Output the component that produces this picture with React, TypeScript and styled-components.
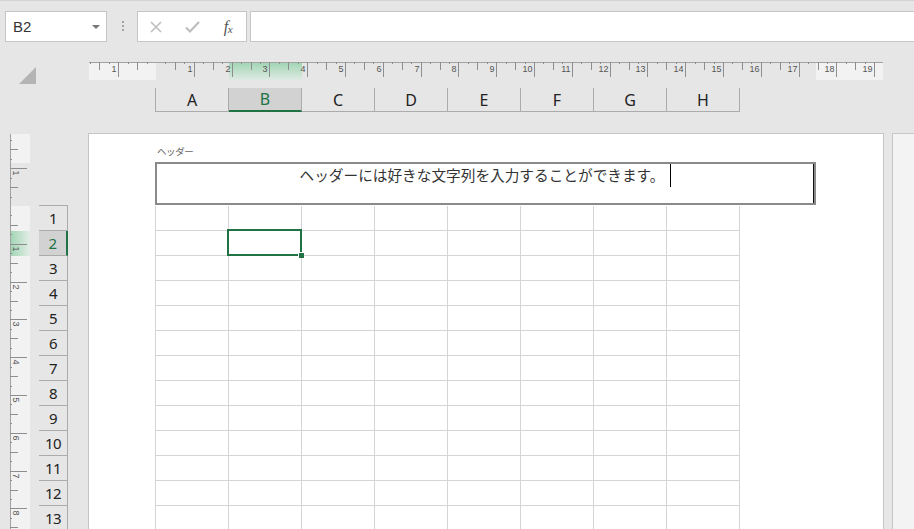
import React from "react";
import styled, { createGlobalStyle } from "styled-components";

const GREEN = "#217346";
const CM = 37.8;
const COLUMNS = ["A", "B", "C", "D", "E", "F", "G", "H"];
const ROWS = Array.from({ length: 14 }, (_, i) => i + 1);

const GlobalStyle = createGlobalStyle`
  html, body { margin: 0; padding: 0; background: #e6e6e6; }
  body { font-family: "Noto Sans", "Noto Sans CJK JP", sans-serif; }
`;

const Window = styled.div`
  width: 914px;
  height: 529px;
  overflow: hidden;
  display: flex;
  flex-direction: column;
  background: #e6e6e6;
  border-top: 1px solid #d4d4d4;
  box-sizing: border-box;
`;

/* ---------- formula bar ---------- */

const FormulaBar = styled.div`
  height: 51px;
  flex-shrink: 0;
  display: flex;
  align-items: flex-start;
  padding-top: 10px;
  box-sizing: border-box;
`;

const NameBox = styled.div`
  width: 102px;
  height: 31px;
  margin-left: 5px;
  box-sizing: border-box;
  border: 1px solid #c6c6c6;
  background: #fff;
  display: flex;
  align-items: center;
  justify-content: space-between;
  padding: 0 6px 0 7px;
  font-family: "Liberation Sans", Arial, sans-serif;
  font-size: 15px;
  color: #333;
`;

const Dots = styled.div`
  margin: 10px 0 0 15px;
  display: flex;
  flex-direction: column;
  gap: 2px;

  span {
    width: 2px;
    height: 2px;
    background: #a3a3a3;
  }
`;

const ButtonGroup = styled.div`
  width: 110px;
  height: 31px;
  margin-left: 13px;
  box-sizing: border-box;
  border: 1px solid #c6c6c6;
  background: #fff;
  display: flex;
  align-items: center;
`;

const IconSlot = styled.div`
  width: 37px;
  height: 100%;
  display: flex;
  align-items: center;
  justify-content: center;
`;

const Fx = styled.span`
  font-family: "Liberation Serif", "Times New Roman", serif;
  font-style: italic;
  font-size: 16px;
  color: #555;
  letter-spacing: -0.5px;

  sub {
    font-size: 11px;
    vertical-align: baseline;
    position: relative;
    top: 1px;
  }
`;

const FormulaInput = styled.div`
  flex: 1;
  height: 31px;
  margin-left: 3px;
  box-sizing: border-box;
  border: 1px solid #c6c6c6;
  border-right: none;
  background: #fff;
`;

/* ---------- sheet top: corner, ruler, column headers ---------- */

const SheetTop = styled.div`
  height: 81px;
  flex-shrink: 0;
  display: flex;
`;

const Corner = styled.div`
  width: 89px;
  flex-shrink: 0;
  padding: 15px 0 0 19px;
  box-sizing: border-box;
`;

const RulerColumn = styled.div`
  width: 794px;
  display: flex;
  flex-direction: column;
  padding-top: 10px;
`;

const ColumnHeaderRow = styled.div`
  margin: 8px 0 0 66px;
  display: flex;
  border-left: 1px solid #ababab;
  align-self: flex-start;
`;

const ColHeader = styled.div<{ $selected?: boolean }>`
  width: 73px;
  height: 24px;
  box-sizing: border-box;
  border-right: 1px solid #ababab;
  border-bottom: ${(p) => (p.$selected ? `2px solid ${GREEN}` : "1px solid #ababab")};
  background: ${(p) => (p.$selected ? "#d2d2d2" : "transparent")};
  color: ${(p) => (p.$selected ? GREEN : "#222")};
  display: flex;
  align-items: center;
  justify-content: center;
  font-size: 16px;
  line-height: 1;
`;

/* ---------- sheet body ---------- */

const SheetBody = styled.div`
  flex: 1;
  min-height: 0;
  display: flex;
`;

const Gutter = styled.div`
  width: 88px;
  flex-shrink: 0;
  display: flex;
  gap: 9px;
  padding-left: 10px;
  box-sizing: border-box;
`;

const VRulerBox = styled.div`
  width: 20px;
  margin-top: 1px;
  flex-shrink: 0;
`;

const RowHeaderList = styled.div`
  width: 29px;
  margin-top: 72px;
  border-top: 1px solid #ababab;
  display: flex;
  flex-direction: column;
  align-self: flex-start;
`;

const RowHeader = styled.div<{ $selected?: boolean }>`
  height: 25px;
  flex-shrink: 0;
  box-sizing: border-box;
  border-right: ${(p) => (p.$selected ? `2px solid ${GREEN}` : "1px solid #ababab")};
  border-bottom: 1px solid #ababab;
  background: ${(p) => (p.$selected ? "#d2d2d2" : "transparent")};
  color: ${(p) => (p.$selected ? GREEN : "#222")};
  display: flex;
  align-items: center;
  justify-content: center;
  font-size: 15px;
  letter-spacing: -0.5px;
  line-height: 1;
`;

const Page = styled.div`
  width: 796px;
  flex-shrink: 0;
  box-sizing: border-box;
  border: 1px solid #c6c6c6;
  border-bottom: none;
  background: #fff;
  padding: 10px 0 0 66px;
`;

const HeaderLabel = styled.div`
  font-family: "Noto Sans CJK JP", sans-serif;
  font-size: 9.5px;
  letter-spacing: -0.4px;
  line-height: 14px;
  color: #666;
  padding-left: 2px;
  margin-bottom: 4px;
`;

const HeaderBox = styled.div`
  width: 661px;
  height: 43px;
  box-sizing: border-box;
  border: 2px solid #8a8a8a;
  box-shadow: inset -1px 0 0 #111;
  display: flex;
  justify-content: center;
  align-items: flex-start;
`;

const HeaderText = styled.span`
  font-family: "Noto Sans CJK JP", sans-serif;
  font-size: 14.67px;
  line-height: 22px;
  color: #333;
`;

const Caret = styled.span`
  width: 1px;
  height: 23px;
  margin-left: 6px;
  background: #000;
`;

const CellGrid = styled.div`
  margin-top: 1px;
  display: grid;
  grid-template-columns: repeat(8, 73px);
  border-left: 1px solid #d4d4d4;
  width: fit-content;
`;

const Cell = styled.div<{ $active?: boolean }>`
  height: 25px;
  box-sizing: border-box;
  border-right: 1px solid #d4d4d4;
  border-bottom: 1px solid #d4d4d4;
  position: relative;

  ${(p) =>
    p.$active &&
    `
    &::before {
      content: "";
      position: absolute;
      top: -2px;
      left: -2px;
      right: -1px;
      bottom: -1px;
      border: 2px solid ${GREEN};
      z-index: 1;
    }
    &::after {
      content: "";
      position: absolute;
      right: -3px;
      bottom: -3px;
      width: 5px;
      height: 5px;
      background: ${GREEN};
      box-shadow: -1px -1px 0 #fff;
      z-index: 2;
    }
  `}
`;

const NextPage = styled.div`
  flex: 1;
  margin-left: 8px;
  background: #f3f3f3;
  border-top: 1px solid #c6c6c6;
  border-left: 1px solid #c6c6c6;
`;

/* ---------- rulers (drawings) ---------- */

function tickLength(q: number, tall: number) {
  if (q % 4 === 0) return tall;
  if (q % 2 === 0) return 8;
  return 2;
}

function HorizontalRuler() {
  const W = 794;
  const H = 18;
  const origin = 67;
  const ticks: React.ReactNode[] = [];
  for (let q = -7; origin + (q * CM) / 4 < W; q++) {
    if (q === 0) continue;
    const x = Math.round(origin + (q * CM) / 4) + 0.5;
    ticks.push(<line key={`t${q}`} x1={x} y1={0} x2={x} y2={tickLength(q, 15)} stroke="#8e8e8e" />);
    if (q % 4 === 0) {
      ticks.push(
        <text key={`l${q}`} x={x - 2} y={10} textAnchor="end" fontSize={9} fill="#555" fontFamily="Liberation Sans, Arial, sans-serif">
          {Math.abs(q / 4)}
        </text>
      );
    }
  }
  return (
    <svg width={W} height={H} style={{ display: "block" }}>
      <rect x={0} y={0} width={67} height={H} fill="#f2f2f2" />
      <rect x={727} y={0} width={67} height={H} fill="#f2f2f2" />
      <defs>
        <linearGradient id="hsel" x1="0" y1="0" x2="0" y2="1">
          <stop offset="0" stopColor="#9fd5b3" />
          <stop offset="1" stopColor="#dfeae3" />
        </linearGradient>
        <linearGradient id="vsel" x1="0" y1="0" x2="1" y2="0">
          <stop offset="0" stopColor="#9fd5b3" />
          <stop offset="1" stopColor="#e3ece6" />
        </linearGradient>
      </defs>
      <rect x={140} y={0} width={73} height={H} fill="url(#hsel)" />
      <line x1={0} y1={0.5} x2={W} y2={0.5} stroke="#a2a2a2" />
      {ticks}
    </svg>
  );
}

function VerticalRuler() {
  const W = 20;
  const H = 396;
  const origin = 72;
  const ticks: React.ReactNode[] = [];
  for (let q = -7; origin + (q * CM) / 4 < H; q++) {
    if (q === 0) continue;
    const y = Math.round(origin + (q * CM) / 4) + 0.5;
    ticks.push(<line key={`t${q}`} x1={0} y1={y} x2={tickLength(q, 17)} y2={y} stroke="#8e8e8e" />);
    if (q % 4 === 0) {
      ticks.push(
        <text
          key={`l${q}`}
          transform={`translate(2.5, ${y + 2}) rotate(90)`}
          fontSize={9}
          fill="#555"
          fontFamily="Liberation Sans, Arial, sans-serif"
        >
          {Math.abs(q / 4)}
        </text>
      );
    }
  }
  return (
    <svg width={W} height={H} style={{ display: "block" }}>
      <rect x={0} y={0} width={W} height={29} fill="#f2f2f2" />
      <rect x={0} y={72} width={W} height={H - 72} fill="#f2f2f2" />
      <rect x={0} y={97} width={W} height={25} fill="url(#vsel)" />
      <line x1={0.5} y1={0} x2={0.5} y2={H} stroke="#a2a2a2" />
      {ticks}
    </svg>
  );
}

/* ---------- app ---------- */

export default function App() {
  return (
    <>
      <GlobalStyle />
      <Window>
        <FormulaBar>
          <NameBox>
            <span>B2</span>
            <svg width="8" height="4" viewBox="0 0 8 4">
              <polygon points="0,0 8,0 4,4" fill="#777" />
            </svg>
          </NameBox>
          <Dots>
            <span />
            <span />
            <span />
          </Dots>
          <ButtonGroup>
            <IconSlot>
              <svg width="12" height="12" viewBox="0 0 12 12">
                <path d="M1 1 L11 11 M11 1 L1 11" stroke="#bcbcbc" strokeWidth="1.5" fill="none" />
              </svg>
            </IconSlot>
            <IconSlot>
              <svg width="15" height="12" viewBox="0 0 15 12">
                <polyline points="1,6.5 5,10.5 14,1" stroke="#bcbcbc" strokeWidth="2" fill="none" />
              </svg>
            </IconSlot>
            <IconSlot>
              <Fx>
                f<sub>x</sub>
              </Fx>
            </IconSlot>
          </ButtonGroup>
          <FormulaInput />
        </FormulaBar>

        <SheetTop>
          <Corner>
            <svg width="17" height="17" viewBox="0 0 17 17">
              <polygon points="17,0 17,17 0,17" fill="#b4b4b4" />
            </svg>
          </Corner>
          <RulerColumn>
            <HorizontalRuler />
            <ColumnHeaderRow>
              {COLUMNS.map((c) => (
                <ColHeader key={c} $selected={c === "B"}>
                  {c}
                </ColHeader>
              ))}
            </ColumnHeaderRow>
          </RulerColumn>
        </SheetTop>

        <SheetBody>
          <Gutter>
            <VRulerBox>
              <VerticalRuler />
            </VRulerBox>
            <RowHeaderList>
              {ROWS.map((r) => (
                <RowHeader key={r} $selected={r === 2}>
                  {r}
                </RowHeader>
              ))}
            </RowHeaderList>
          </Gutter>
          <Page>
            <HeaderLabel>ヘッダー</HeaderLabel>
            <HeaderBox>
              <HeaderText>ヘッダーには好きな文字列を入力することができます。</HeaderText>
              <Caret />
            </HeaderBox>
            <CellGrid>
              {ROWS.map((r) =>
                COLUMNS.map((c) => <Cell key={`${c}${r}`} $active={r === 2 && c === "B"} />)
              )}
            </CellGrid>
          </Page>
          <NextPage />
        </SheetBody>
      </Window>
    </>
  );
}
